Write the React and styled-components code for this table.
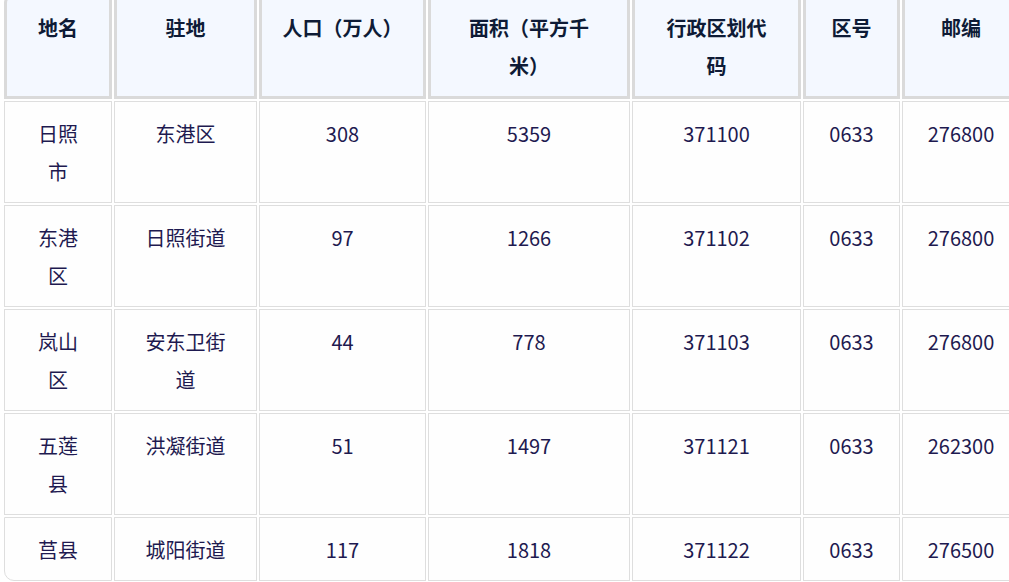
import React from "react";
import styled, { createGlobalStyle } from "styled-components";

const GlobalStyle = createGlobalStyle`
  html, body {
    margin: 0;
    padding: 0;
    background: #ffffff;
    overflow: hidden;
  }
  body {
    font-family: "Noto Sans CJK SC", "Noto Sans", sans-serif;
  }
`;

const Page = styled.div`
  padding: 0 0 0 2px;
  margin-top: -9px;
`;

const Table = styled.table`
  width: 1020px;
  table-layout: fixed;
  border-collapse: separate;
  border-spacing: 2px;
  font-family: "Noto Sans CJK SC", "Noto Sans", sans-serif;
  font-size: 20px;
  line-height: 38px;
`;

const HeadCell = styled.th`
  box-sizing: border-box;
  width: ${(p) => p.$w}px;
  padding: 13px 8px 11px;
  background: #f4f8ff;
  border: 3px solid #dadada;
  color: #0e1b36;
  font-weight: 700;
  text-align: center;
  vertical-align: top;
  white-space: pre-line;

  &:first-child {
    border-top-left-radius: 10px;
  }
  &:last-child {
    border-top-right-radius: 10px;
  }
`;

const Row = styled.tr``;

const Cell = styled.td`
  box-sizing: border-box;
  padding: 13px 8px 11px;
  background: #fefefe;
  border: 1px solid #dedede;
  color: #1e1a50;
  font-weight: 400;
  text-align: center;
  vertical-align: top;
  white-space: pre-line;

  tr:last-child > &:first-child {
    border-bottom-left-radius: 10px;
  }
  tr:last-child > &:last-child {
    border-bottom-right-radius: 10px;
  }
`;

const columns = [
  { label: "地名", w: 108 },
  { label: "驻地", w: 143 },
  { label: "人口（万人）", w: 167 },
  { label: "面积（平方千\n米）", w: 202 },
  { label: "行政区划代\n码", w: 169 },
  { label: "区号", w: 97 },
  { label: "邮编", w: 118 },
];

const rows = [
  ["日照\n市", "东港区", "308", "5359", "371100", "0633", "276800"],
  ["东港\n区", "日照街道", "97", "1266", "371102", "0633", "276800"],
  ["岚山\n区", "安东卫街\n道", "44", "778", "371103", "0633", "276800"],
  ["五莲\n县", "洪凝街道", "51", "1497", "371121", "0633", "262300"],
  ["莒县", "城阳街道", "117", "1818", "371122", "0633", "276500"],
];

export default function App() {
  return (
    <>
      <GlobalStyle />
      <Page>
        <Table>
          <thead>
            <Row>
              {columns.map((c) => (
                <HeadCell key={c.label} $w={c.w}>
                  {c.label}
                </HeadCell>
              ))}
            </Row>
          </thead>
          <tbody>
            {rows.map((r, i) => (
              <Row key={i}>
                {r.map((v, j) => (
                  <Cell key={j}>{v}</Cell>
                ))}
              </Row>
            ))}
          </tbody>
        </Table>
      </Page>
    </>
  );
}
